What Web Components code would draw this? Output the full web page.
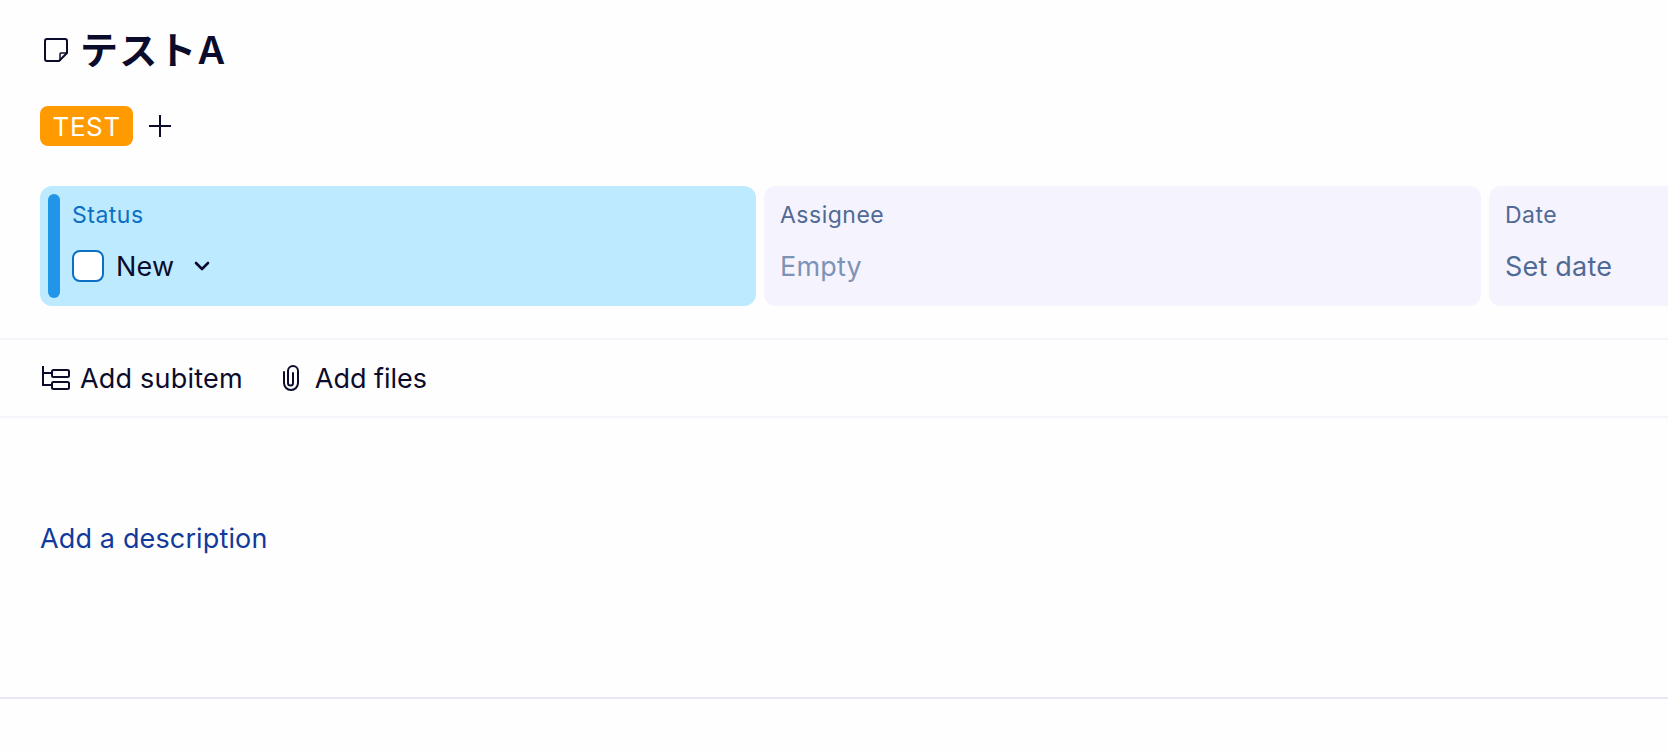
<!DOCTYPE html>
<html lang="ja">
<head>
<meta charset="utf-8">
<title>テストA</title>
<style>
  html, body { margin: 0; height: 100%; overflow: hidden; background: #fefefe; }
  body { font-family: Inter, "Noto Sans CJK JP", sans-serif; color: #0b0b2b; }
</style>
</head>
<body>
<item-page></item-page>
<script>
// Header with the note icon and the title.
const headerTemplate = document.createElement('template')
headerTemplate.innerHTML = `
<style>
  :host { display: flex; align-items: center; gap: 12px; height: 50px; padding: 25px 40px 0 44px; }
  svg { width: 24px; height: 24px; flex: none; }
  h1 { margin: 0; font: 600 38px/50px Inter, "Noto Sans CJK JP", sans-serif; letter-spacing: 1.15px; color: #0b0b2b; }
</style>
<svg viewBox="0 0 24 24" fill="none" stroke="#0b0b2b" stroke-width="2" stroke-linejoin="round">
  <path d="M3 1h18a2 2 0 0 1 2 2v12l-8 8H3a2 2 0 0 1-2-2V3a2 2 0 0 1 2-2z"/>
  <path d="M23 15h-6a1 1 0 0 0-1 1v7" stroke-width="1.5"/>
</svg>
<h1><slot></slot></h1>
`
customElements.define('item-header', class extends HTMLElement {
  constructor () {
    super()
    this.attachShadow({ mode: 'open' }).appendChild(headerTemplate.content.cloneNode(true))
  }
})

// Tag row.
const tagsTemplate = document.createElement('template')
tagsTemplate.innerHTML = `
<style>
  :host { display: flex; align-items: center; gap: 16px; padding: 31px 40px 0; }
  .tag { display: flex; align-items: center; height: 40px; padding: 0 12.5px; border-radius: 8px; background: #ff9a00; color: #fff; font-size: 26px; letter-spacing: 0.6px; }
  svg { width: 22px; height: 22px; }
</style>
<span class="tag"><slot></slot></span>
<svg viewBox="0 0 22 22" stroke="#0b0b2b" stroke-width="2"><path d="M0 11h22M11 0v22"/></svg>
`
customElements.define('item-tags', class extends HTMLElement {
  constructor () {
    super()
    this.attachShadow({ mode: 'open' }).appendChild(tagsTemplate.content.cloneNode(true))
  }
})

// One property card. Attribute "accent" gives the blue status look.
const fieldTemplate = document.createElement('template')
fieldTemplate.innerHTML = `
<style>
  :host { display: flex; box-sizing: border-box; height: 120px; padding: 8px 16px 8px 8px; border-radius: 12px; background: #f5f3fd; color: #4f6a94; }
  :host([accent]) { background: #bdeaff; color: #0b6fc4; }
  .bar { width: 12px; border-radius: 6px; margin-right: 12px; }
  :host([accent]) .bar { background: #2196e8; }
  :host(:not([accent])) .bar { width: 0; margin-right: 8px; }
  .label { font-size: 23px; line-height: 26px; letter-spacing: 0.5px; margin-top: 8px; }
  .value { display: flex; align-items: center; margin-top: 23px; font-size: 27px; letter-spacing: 0.2px; line-height: 32px; }
</style>
<div class="bar"></div>
<div>
  <div class="label"><slot name="label"></slot></div>
  <div class="value"><slot></slot></div>
</div>
`
customElements.define('item-field', class extends HTMLElement {
  constructor () {
    super()
    this.attachShadow({ mode: 'open' }).appendChild(fieldTemplate.content.cloneNode(true))
  }
})

// Toolbar button with icon slot.
const actionTemplate = document.createElement('template')
actionTemplate.innerHTML = `
<style>
  :host { display: inline-flex; align-items: center; gap: var(--action-gap, 10px); font-size: 27px; letter-spacing: var(--action-spacing, 0.2px); color: #0b0b2b; }
  ::slotted(svg) { flex: none; }
</style>
<slot name="icon"></slot><slot></slot>
`
customElements.define('item-action', class extends HTMLElement {
  constructor () {
    super()
    this.attachShadow({ mode: 'open' }).appendChild(actionTemplate.content.cloneNode(true))
  }
})

// The whole page.
const pageTemplate = document.createElement('template')
pageTemplate.innerHTML = `
<style>
  :host { display: block; width: 1668px; height: 754px; overflow: hidden; }
  .fields { display: grid; grid-template-columns: 716px 717px 717px; gap: 8px; padding: 40px 0 0 40px; }
  .check { width: 28px; height: 28px; margin: -2px 12px 0 0; border: 2px solid #0b6fc4; border-radius: 8px; background: #fff; }
  .new { color: #0b0b2b; }
  .chev { margin: -2px 0 0 20px; }
  .empty { color: #7d93b5; }
  .actions { display: flex; align-items: center; gap: 40px; margin-top: 32px; padding: 0 42px; border-top: 2px solid #f5f4fb; border-bottom: 2px solid #f5f4fb; box-sizing: border-box; height: 80px; }
  .files { --action-gap: 16px; --action-spacing: 0; }
  .desc { height: 281px; padding: 0 40px; box-sizing: border-box; border-bottom: 2px solid #e6e9f5; }
  .desc span { display: block; padding-top: 105px; font-size: 27px; letter-spacing: 0.14px; line-height: 32px; color: #123a9c; }
</style>
<item-header>テストA</item-header>
<item-tags>TEST</item-tags>
<div class="fields">
  <item-field accent>
    <span slot="label">Status</span>
    <span class="check"></span><span class="new">New</span>
    <svg class="chev" width="16" height="10" viewBox="0 0 16 10" fill="none" stroke="#0b0b2b" stroke-width="2.6" stroke-linecap="round" stroke-linejoin="round"><path d="M2 2l6 6 6-6"/></svg>
  </item-field>
  <item-field><span slot="label">Assignee</span><span class="empty">Empty</span></item-field>
  <item-field><span slot="label">Date</span>Set date</item-field>
</div>
<div class="actions">
  <item-action>
    <svg slot="icon" width="28" height="24" viewBox="0 0 28 24" fill="none" stroke="#0b0b2b" stroke-width="2">
      <path d="M1 0v19h9M1 7h9"/><rect x="10" y="4" width="17" height="7" rx="1.5"/><rect x="10" y="16" width="17" height="7" rx="1.5"/>
    </svg>
    Add subitem
  </item-action>
  <item-action class="files">
    <svg slot="icon" width="16" height="27" viewBox="0 0 16 27" fill="none" stroke="#0b0b2b" stroke-width="2" stroke-linecap="round">
      <path d="M1 7v11a7 7 0 0 0 14 0V6a5 5 0 0 0-10 0v12a2.5 2.5 0 0 0 5 0V8"/>
    </svg>
    Add files
  </item-action>
</div>
<div class="desc"><span>Add a description</span></div>
`
customElements.define('item-page', class extends HTMLElement {
  constructor () {
    super()
    this.attachShadow({ mode: 'open' }).appendChild(pageTemplate.content.cloneNode(true))
  }
})
</script>
</body>
</html>
